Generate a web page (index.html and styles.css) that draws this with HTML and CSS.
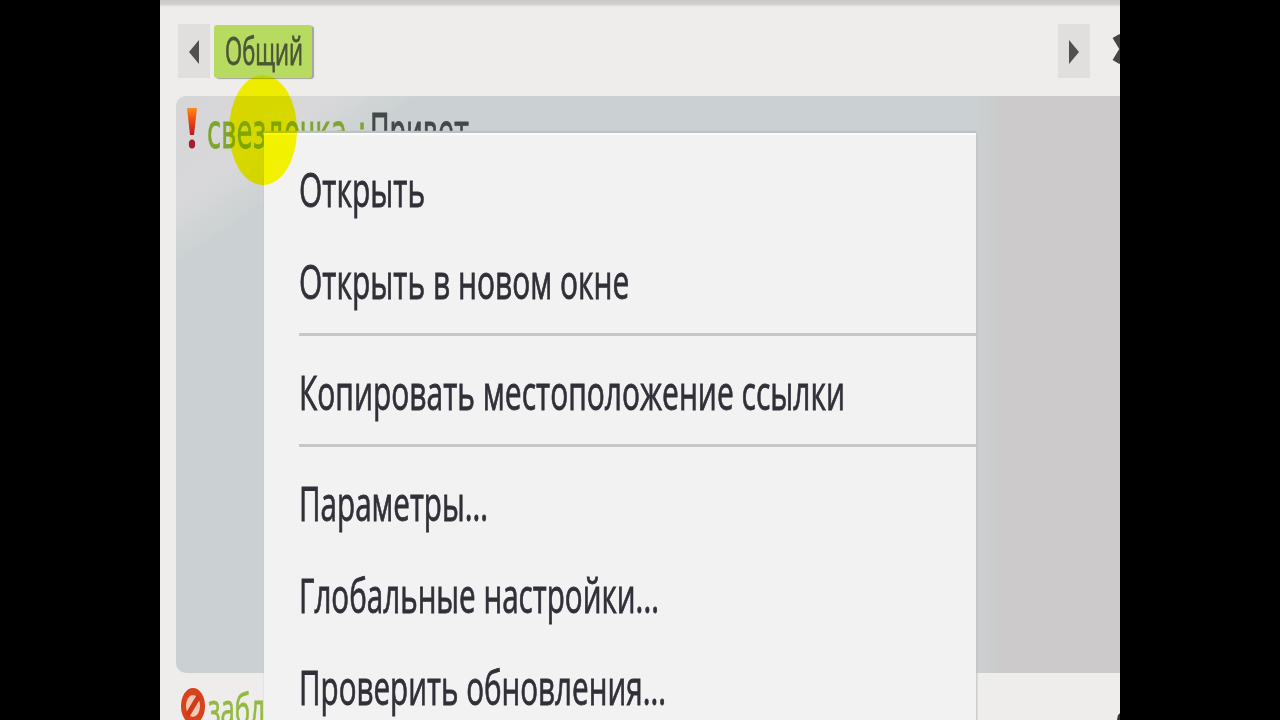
FILE: index.html
```html
<!DOCTYPE html>
<html lang="ru">
<head>
  <meta charset="UTF-8" />
  <title>Общий</title>
  <link rel="stylesheet" href="styles.css">
</head>
<body>
  <main class="window">
    <header class="tabs">
      <button class="arrow"><svg width="10" height="24" viewBox="0 0 10 24"><path d="M10 0v24L0 12z"/></svg></button>
      <div class="tab"><span>Общий</span></div>
      <button class="arrow next"><svg width="10" height="24" viewBox="0 0 10 24"><path d="M0 0v24l10-12z"/></svg></button>
      <svg class="close" width="24" height="36" viewBox="0 0 24 36"><path d="M4 5l16 26M20 5L4 31"/></svg>
    </header>

    <section class="chat">
      <svg class="alert" width="14" height="44" viewBox="0 0 14 44">
        <defs>
          <linearGradient id="fire" x1="0" y1="0" x2="0" y2="1">
            <stop offset="0" stop-color="#ff8a1c"/>
            <stop offset="0.45" stop-color="#ee4a14"/>
            <stop offset="1" stop-color="#b81a20"/>
          </linearGradient>
        </defs>
        <path d="M2 0h10L9 27H5z" fill="url(#fire)"/>
        <ellipse cx="7" cy="36" rx="3.2" ry="4.5" fill="#a81c30"/>
      </svg>
      <p class="message"><a href="#">свездочка</a><b>:</b><span>Привет</span></p>
    </section>

    <footer class="status">
      <svg width="24" height="38" viewBox="0 0 24 38">
        <ellipse cx="12" cy="19" rx="12" ry="18" fill="#d9431c"/>
        <ellipse cx="12" cy="19" rx="7" ry="11" fill="#f3c9b4"/>
        <path d="M18 9L6 29" stroke="#cf3a18" stroke-width="5"/>
      </svg>
      <span class="blocked">забл</span>
      <i class="grip"></i>
    </footer>

    <nav class="menu">
      <a href="#" class="item"><span>Открыть</span></a>
      <a href="#" class="item"><span>Открыть в новом окне</span></a>
      <hr>
      <a href="#" class="item"><span>Копировать местоположение ссылки</span></a>
      <hr>
      <a href="#" class="item dialog"><span>Параметры...</span></a>
      <a href="#" class="item dialog"><span>Глобальные настройки...</span></a>
      <a href="#" class="item dialog"><span>Проверить обновления...</span></a>
    </nav>
    <div class="pointer"></div>
  </main>
</body>
</html>
```
FILE: styles.css
```css
body {
  margin: 0;
  background: #000;
  overflow: hidden;
}
.window {
  position: relative;
  box-sizing: border-box;
  width: 960px;
  height: 720px;
  margin: 0 auto;
  padding-top: 6px;
  overflow: hidden;
  background: linear-gradient(#cacac9, #d0d0cf 4px, #eeedeb 7px);
  font-family: "Open Sans", sans-serif;
}
.tabs {
  display: flex;
  align-items: center;
  height: 90px;
  padding: 0 0 0 18px;
  box-sizing: border-box;
}
.arrow {
  display: flex;
  align-items: center;
  justify-content: center;
  width: 32px;
  height: 54px;
  padding: 0;
  border: 0;
  background: #e0dfde;
}
.arrow svg {
  margin-top: 2px;
  fill: #505050;
}
.tab {
  width: 98px;
  height: 53px;
  margin-left: 4px;
  box-sizing: border-box;
  padding-left: 11px;
  border-radius: 3px;
  background: #b7da60;
  box-shadow: 2px 1px 1px #a4a69c;
  font: 38px/50px "Open Sans", sans-serif;
  color: #4a5436;
  -webkit-text-stroke: 0.8px #4a5436;
}
.tab span,
.item span,
.message a,
.message span {
  display: inline-block;
  white-space: nowrap;
  transform: scaleX(0.638);
  transform-origin: 0 50%;
}
.tab span {
  transform: scaleX(0.58);
}
.next {
  margin-left: auto;
}
.close {
  margin: -4px -16px 0 22px;
  fill: none;
  stroke: #444;
  stroke-width: 8;
}
.chat {
  display: flex;
  align-items: flex-start;
  height: 577px;
  margin-left: 16px;
  padding: 12px 0 0 9px;
  box-sizing: border-box;
  border-radius: 10px 0 0 10px;
  background:
    linear-gradient(145deg, #d6d5d7 0, #d8d8da 90px, transparent 140px),
    linear-gradient(90deg, #cbd1d2 795px, #cccacb 825px);
}
.alert {
  flex: none;
}
.message {
  display: flex;
  margin: -5px 0 0;
  padding-left: 8px;
  font: 48px/56px "DejaVu Sans", sans-serif;
  -webkit-text-stroke: 0.8px;
}
.message a {
  width: 147px;
  color: #7fa52c;
  text-decoration: none;
  transform: scaleX(0.54);
}
.message b {
  width: 16px;
  color: #7fa52c;
  font-weight: normal;
  transform: scaleX(0.6);
}
.message span {
  color: #454849;
  transform: scaleX(0.54);
}
.status {
  display: flex;
  align-items: flex-start;
  height: 47px;
  padding: 14px 0 0 21px;
  box-sizing: border-box;
}
.blocked {
  width: 60px;
  margin: -3px 0 0 3px;
  font-size: 43px;
  line-height: 50px;
  color: #94b842;
  -webkit-text-stroke: 0.8px #94b842;
  transform: scaleX(0.6);
  transform-origin: 0 50%;
}
.grip {
  flex: none;
  width: 8px;
  height: 16px;
  margin: 26px -5px 0 auto;
  border-radius: 50%;
  background: #333;
}
.menu {
  position: absolute;
  left: 104px;
  top: 133px;
  width: 712px;
  height: 600px;
  padding-top: 11px;
  box-sizing: border-box;
  background: #f2f2f3;
  box-shadow: inset 0 2px 1px #fafcfb, 0 -2px 1px #bcc1c2, 1px 0 2px #c0c2c2;
}
.item {
  display: block;
  height: 92px;
  padding-left: 35px;
  font-size: 47px;
  line-height: 91px;
  color: #303038;
  -webkit-text-stroke: 0.8px #303038;
  text-decoration: none;
}
.dialog span {
  transform: scaleX(0.63);
}
.menu hr {
  height: 3px;
  margin: 5px 0 11px 35px;
  border: 0;
  background: #c6c6c7;
}
/* click highlight */
.pointer {
  position: absolute;
  left: 69px;
  top: 75px;
  width: 68px;
  height: 110px;
  border-radius: 50%;
  background: #ffff00;
  mix-blend-mode: multiply;
}
```
